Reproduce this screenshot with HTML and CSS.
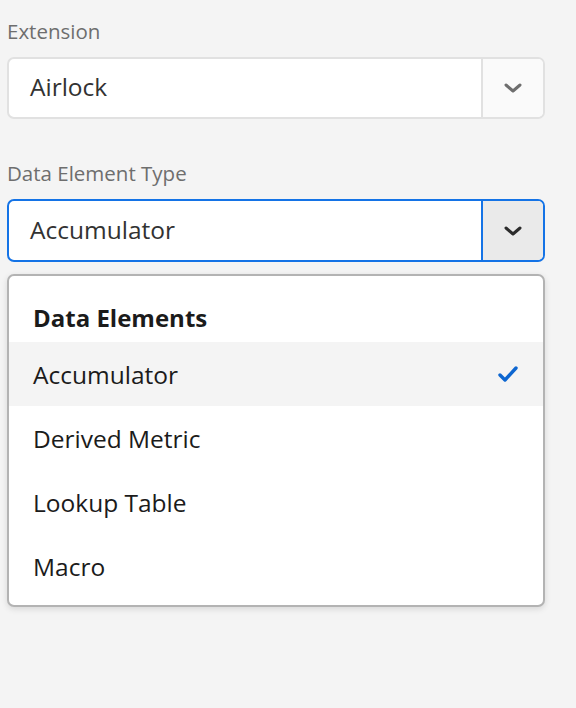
FILE: index.html
```html
<!DOCTYPE html>
<html lang="en">
<head>
    <meta charset="utf-8" />
    <title>Data Element</title>
    <link rel="stylesheet" href="styles.css">
</head>
<body>

    <!-- Extension -->
    <div class="field">
        <label class="field-label">Extension</label>
        <div class="picker">
            <div class="picker-value">Airlock</div>
            <div class="picker-btn">
                <svg width="20" height="12" viewBox="0 0 20 12"><path d="M3 3 L10 9 L17 3" fill="none" stroke="currentColor" stroke-width="3" stroke-linecap="round" stroke-linejoin="round"/></svg>
            </div>
        </div>
    </div>

    <!-- Data Element Type -->
    <div class="field">
        <label class="field-label">Data Element Type</label>
        <div class="picker picker-focus">
            <div class="picker-value">Accumulator</div>
            <div class="picker-btn">
                <svg width="20" height="12" viewBox="0 0 20 12"><path d="M3 3 L10 9 L17 3" fill="none" stroke="currentColor" stroke-width="3" stroke-linecap="round" stroke-linejoin="round"/></svg>
            </div>
        </div>

        <div class="menu">
            <div class="menu-heading">Data Elements</div>
            <div class="menu-item selected">
                <span>Accumulator</span>
                <svg class="check" width="22" height="20" viewBox="0 0 22 20"><path d="M3 11 L8 16 L19 4" fill="none" stroke="currentColor" stroke-width="3.4" stroke-linecap="round" stroke-linejoin="round"/></svg>
            </div>
            <div class="menu-item"><span>Derived Metric</span></div>
            <div class="menu-item"><span>Lookup Table</span></div>
            <div class="menu-item"><span>Macro</span></div>
        </div>
    </div>

</body>
</html>
```

FILE: styles.css
```css
body {
    background-color: #f4f4f4;
    font-family: 'Open Sans', 'Noto Sans', sans-serif;
    margin: 0;
    padding: 18px 31px 0 7px;
}

.field {
    margin-bottom: 41px;
}

.field-label {
    display: block;
    color: #6e6e6e;
    font-size: 20.5px;
    line-height: 26px;
    margin-bottom: 13px;
}

.picker {
    display: flex;
    height: 62px;
    box-sizing: border-box;
    border: 2px solid #e1e1e1;
    border-radius: 7px;
    background-color: #ffffff;
    overflow: hidden;
}

.picker-value {
    flex: 1;
    display: flex;
    align-items: center;
    padding: 0 0 3px 21px;
    color: #323232;
    font-size: 24.5px;
}

.picker-btn {
    width: 60px;
    display: flex;
    align-items: center;
    justify-content: center;
    border-left: 2px solid #e1e1e1;
    background-color: #fafafa;
    color: #6e6e6e;
}

.picker-focus {
    border-color: #1473e6;
    height: 63px;
}

    .picker-focus .picker-btn {
        border-left-color: #1473e6;
        background-color: #eaeaea;
        color: #2c2c2c;
    }

.menu {
    margin-top: 12px;
    background-color: #ffffff;
    border: 2px solid #b3b3b3;
    border-radius: 7px;
    box-shadow: 0 2px 6px rgba(0,0,0,0.12);
    padding: 0 0 7px 0;
}

.menu-heading {
    display: flex;
    align-items: center;
    height: 66px;
    box-sizing: border-box;
    padding: 16px 0 0 24px;
    font-size: 24px;
    font-weight: bold;
    color: #1b1b1b;
}

.menu-item {
    display: flex;
    align-items: center;
    justify-content: space-between;
    height: 64px;
    padding: 0 24px;
    font-size: 24.5px;
    color: #1b1b1b;
}

    .menu-item.selected {
        background-color: #f4f4f4;
    }

.check {
    color: #0d66d0;
}
```
